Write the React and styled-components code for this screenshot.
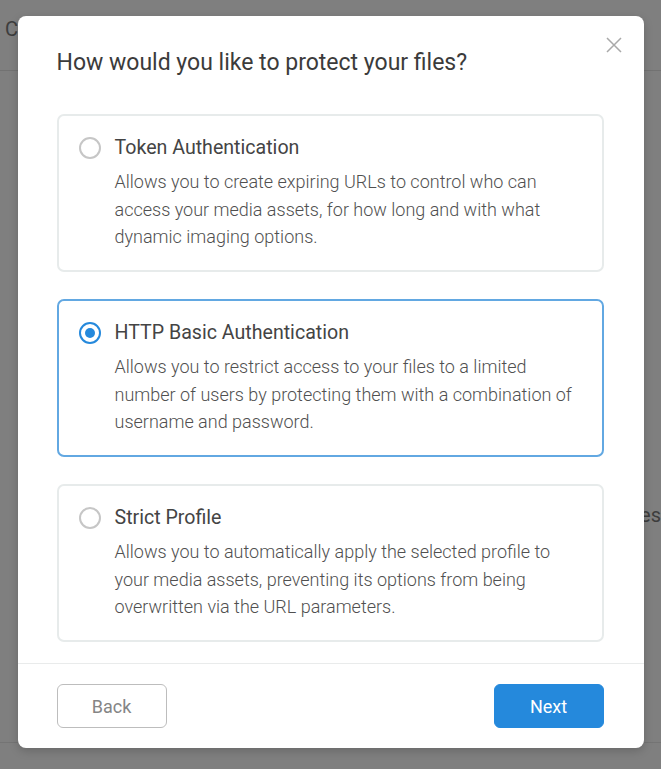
import React, { useState } from "react";
import styled, { createGlobalStyle } from "styled-components";

const Global = createGlobalStyle`
  html, body { margin: 0; padding: 0; }
  body { font-family: Roboto, "Liberation Sans", Arial, sans-serif; background: #7f7f7f; }
  * { box-sizing: border-box; }
`;

const Page = styled.div`
  position: relative;
  width: 661px;
  height: 769px;
  overflow: hidden;
  background: #7f7f7f;
`;

const BgHeader = styled.div`
  height: 71px;
  border-bottom: 1px solid #727272;
  display: flex;
  align-items: center;
  padding: 0 0 12px 5px;
  color: #3d3d3d;
  font-size: 20px;
`;

const BgRow = styled.div`
  display: flex;
  justify-content: flex-end;
  margin-top: 432px;
  color: #3d3d3d;
  font-size: 20px;
  white-space: nowrap;
`;

const BgFooter = styled.div`
  position: absolute;
  left: 0;
  right: 0;
  top: 742px;
  border-top: 1px solid #747474;
`;

const Overlay = styled.div`
  position: absolute;
  inset: 0;
  display: flex;
  justify-content: center;
  padding-top: 16px;
`;

const Modal = styled.div`
  position: relative;
  width: 626px;
  height: 732px;
  background: #fff;
  border-radius: 8px;
  box-shadow: 0 3px 10px rgba(0, 0, 0, 0.18);
  display: flex;
  flex-direction: column;
`;

const CloseButton = styled.button`
  position: absolute;
  top: 19px;
  right: 20px;
  width: 20px;
  height: 20px;
  padding: 0;
  border: none;
  background: none;
  cursor: pointer;
  display: flex;
  align-items: center;
  justify-content: center;
`;

const Body = styled.div`
  padding: 33px 40px 20px 39px;
  flex: 1;
`;

const Title = styled.h2`
  margin: 0 0 37px;
  font-size: 23px;
  line-height: 28px;
  font-weight: 400;
  color: #3b3b3b;
`;

const Options = styled.div`
  display: flex;
  flex-direction: column;
  gap: 27px;
`;

const Card = styled.label`
  display: flex;
  flex: none;
  align-items: flex-start;
  gap: 14px;
  padding: 19px 20px 18px 20px;
  border: 2px solid ${(p) => (p.$selected ? "#62a8e2" : "#e7ebeb")};
  border-radius: 7px;
  cursor: pointer;
  height: 158px;
`;

const Radio = styled.span`
  flex: none;
  width: 22px;
  height: 22px;
  margin-top: 2px;
  border-radius: 50%;
  border: 2px solid ${(p) => (p.$checked ? "#2589dc" : "#c6c6c6")};
  display: flex;
  align-items: center;
  justify-content: center;
  &::after {
    content: "";
    width: 10px;
    height: 10px;
    border-radius: 50%;
    background: ${(p) => (p.$checked ? "#2589dc" : "transparent")};
  }
`;

const Texts = styled.div`
  display: flex;
  flex-direction: column;
  gap: 7px;
`;

const OptionTitle = styled.div`
  font-size: 19.6px;
  line-height: 26px;
  color: #444;
`;

const OptionDesc = styled.div`
  font-size: 18px;
  line-height: 27.5px;
  font-weight: 300;
  color: #505050;
`;

const Footer = styled.div`
  border-top: 1px solid #e9ebeb;
  padding: 20px 40px 20px 39px;
  display: flex;
  justify-content: space-between;
`;

const Button = styled.button`
  width: 110px;
  height: 44px;
  border-radius: 6px;
  font-family: inherit;
  font-size: 18px;
  cursor: pointer;
  border: 1px solid ${(p) => (p.$primary ? "#2589dc" : "#bdbdbd")};
  background: ${(p) => (p.$primary ? "#2589dc" : "#fff")};
  color: ${(p) => (p.$primary ? "#fff" : "#858585")};
`;

const options = [
  {
    id: "token",
    title: "Token Authentication",
    desc: "Allows you to create expiring URLs to control who can access your media assets, for how long and with what dynamic imaging options.",
  },
  {
    id: "basic",
    title: "HTTP Basic Authentication",
    desc: "Allows you to restrict access to your files to a limited number of users by protecting them with a combination of username and password.",
  },
  {
    id: "strict",
    title: "Strict Profile",
    desc: "Allows you to automatically apply the selected profile to your media assets, preventing its options from being overwritten via the URL parameters.",
  },
];

export default function App() {
  const [selected, setSelected] = useState("basic");
  return (
    <>
      <Global />
      <Page>
        <BgHeader>C</BgHeader>
        <BgRow>Devices</BgRow>
        <BgFooter />
        <Overlay>
          <Modal>
            <CloseButton aria-label="Close">
              <svg width="16" height="16" viewBox="0 0 16 16">
                <path d="M1 1L15 15M15 1L1 15" stroke="#a9a9a9" strokeWidth="1.5" fill="none" />
              </svg>
            </CloseButton>
            <Body>
              <Title>How would you like to protect your files?</Title>
              <Options>
                {options.map((o) => (
                  <Card key={o.id} $selected={selected === o.id} onClick={() => setSelected(o.id)}>
                    <Radio $checked={selected === o.id} />
                    <Texts>
                      <OptionTitle>{o.title}</OptionTitle>
                      <OptionDesc>{o.desc}</OptionDesc>
                    </Texts>
                  </Card>
                ))}
              </Options>
            </Body>
            <Footer>
              <Button>Back</Button>
              <Button $primary>Next</Button>
            </Footer>
          </Modal>
        </Overlay>
      </Page>
    </>
  );
}
